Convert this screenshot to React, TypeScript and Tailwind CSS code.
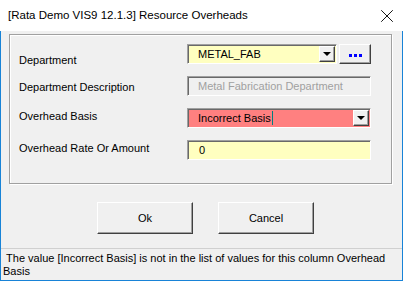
import { X } from 'lucide-react';

const font = { fontFamily: '"Liberation Sans", Arial, sans-serif' };

// small raised dropdown arrow button used inside combos
function DropBtn() {
  return (
    <div className="w-[16px] h-[16px] bg-[#f0f0f0] border-t border-l border-t-white border-l-white border-r border-b border-r-[#404040] border-b-[#404040] shadow-[inset_-1px_-1px_0_#a0a0a0] flex items-center justify-center">
      <div className="w-0 h-0 border-l-[4px] border-r-[4px] border-t-[4px] border-l-transparent border-r-transparent border-t-black" />
    </div>
  );
}

const sunken =
  'border-t border-l border-t-[#a0a0a0] border-l-[#a0a0a0] border-r border-b border-r-white border-b-white shadow-[inset_1px_1px_0_#696969]';

const raised =
  'bg-[#f0f0f0] border-t border-l border-t-white border-l-white border-r border-b border-r-[#404040] border-b-[#404040] shadow-[inset_-1px_-1px_0_#a0a0a0]';

export default function App() {
  return (
    <div className="w-[403px] h-[281px] bg-[#f0f0f0] flex flex-col text-[11px] text-black overflow-hidden" style={font}>
      {/* Title bar */}
      <div className="h-[31px] bg-white flex items-center justify-between pl-[8px] pr-[5px] shrink-0">
        <span className="text-[11.5px] leading-none">[Rata Demo VIS9 12.1.3] Resource Overheads</span>
        <X size={22} strokeWidth={1} className="text-black" />
      </div>

      <div className="flex-1 flex flex-col border-l border-r border-b border-[#1883d7]">
        {/* Group frame */}
        <div className="ml-[8px] mt-[3px] w-[383px] h-[150px] border border-[#a0a0a0] shadow-[inset_1px_1px_0_#fff,1px_1px_0_#fff] pl-[9px] pt-[9px] flex flex-col gap-[12px]">
          <div className="flex items-start h-[20px]">
            <div className="w-[168px] pt-[8px] leading-[16px]">Department</div>
            <div className={`w-[150px] h-[20px] bg-[#ffffc0] ${sunken} flex items-center justify-between pl-[10px] pr-[1px]`}>
              <span>METAL_FAB</span>
              <DropBtn />
            </div>
            <div className={`ml-[2px] w-[32px] h-[20px] ${raised} flex items-center justify-center gap-[2px] pt-[2px]`}>
              <div className="w-[3px] h-[3px] bg-[#0000ff]" />
              <div className="w-[3px] h-[3px] bg-[#0000ff]" />
              <div className="w-[3px] h-[3px] bg-[#0000ff]" />
            </div>
          </div>

          <div className="flex items-start h-[20px]">
            <div className="w-[168px] pt-[3px] leading-[16px]">Department Description</div>
            <div className={`w-[184px] h-[20px] bg-[#f0f0f0] ${sunken} flex items-center pl-[10px] text-[#a0a0a0]`}>
              Metal Fabrication Department
            </div>
          </div>

          <div className="flex items-start h-[20px]">
            <div className="w-[168px] leading-[16px]">Overhead Basis</div>
            <div className={`w-[184px] h-[20px] bg-[#ff8080] ${sunken} flex items-center justify-between pl-[10px] pr-[1px]`}>
              <span className="flex items-center">
                Incorrect Basis
                <span className="ml-[1px] w-[1px] h-[14px] bg-[#008080]" />
              </span>
              <DropBtn />
            </div>
          </div>

          <div className="flex items-start h-[20px]">
            <div className="w-[168px] leading-[16px]">Overhead Rate Or Amount</div>
            <div className={`w-[184px] h-[20px] bg-[#ffffc0] ${sunken} flex items-center pl-[11px]`}>0</div>
          </div>
        </div>

        {/* Buttons */}
        <div className="flex ml-[96px] mt-[18px] gap-[25px]">
          <button className={`w-[96px] h-[32px] ${raised}`}>Ok</button>
          <button className={`w-[96px] h-[32px] ${raised}`}>Cancel</button>
        </div>

        {/* Status */}
        <div className="mt-[14px] flex-1 border-t border-t-[#d0d0d0] pl-[2px] pt-[3px] leading-[13px] text-[11px] whitespace-pre-wrap">
          {' The value [Incorrect Basis] is not in the list of values for this column Overhead Basis'}
        </div>
      </div>
    </div>
  );
}
